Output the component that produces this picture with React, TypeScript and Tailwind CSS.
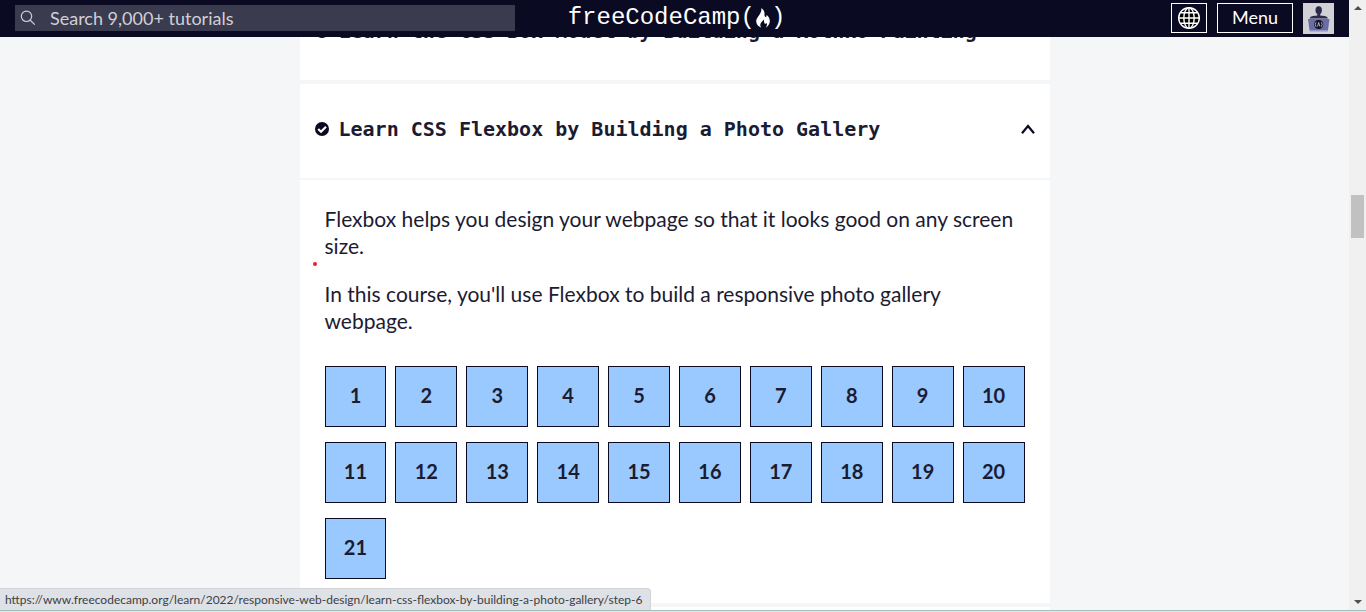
import React from "react";

const steps = Array.from({ length: 21 }, (_, i) => i + 1);
const courseUrl =
  "https://www.freecodecamp.org/learn/2022/responsive-web-design/learn-css-flexbox-by-building-a-photo-gallery";

function SearchIcon() {
  return (
    <svg viewBox="0 0 16 16" className="size-4" fill="none" stroke="#d0d0d5" strokeWidth="1.2" aria-hidden="true">
      <circle cx="6.5" cy="6.3" r="5.2" />
      <path d="M10.3 10.2 L14.8 14.6" />
    </svg>
  );
}

function GlobeIcon() {
  return (
    <svg viewBox="0 0 24 24" className="size-6" fill="#000" stroke="#fff" strokeWidth="1.4" aria-hidden="true">
      <circle cx="12" cy="12" r="10.3" />
      <ellipse cx="12" cy="12" rx="5.2" ry="10.3" />
      <path d="M12 1.7V22.3M1.7 12H22.3M3.4 6.8H20.6M3.4 17.2H20.6" />
    </svg>
  );
}

function Avatar() {
  return (
    <svg viewBox="0 0 31 31" className="size-[31px]" aria-hidden="true">
      <rect width="31" height="31" fill="#d0d0d5" />
      <ellipse cx="15.7" cy="7.2" rx="3.2" ry="4" fill="#2a2a4e" />
      <path d="M6.5 15.5Q7 13.2 10 13L14.3 12.6V10H17.2V12.6L21.5 13Q24.5 13.2 25 15.5Z" fill="#2a2a4e" />
      <path d="M5 16H26.5L25 27H6.5Z" fill="#6a6ca5" />
      <path d="M6.5 27.8H25" stroke="#8587c0" strokeWidth="1.2" />
      <circle cx="15.7" cy="21.5" r="4.6" fill="#12122a" />
      <path d="M13 19.3q-1.5 2.2 0 4.4M18.4 19.3q1.5 2.2 0 4.4M14.5 23.5l1.2-4 1.2 4" fill="none" stroke="#d0d0d5" strokeWidth=".8" />
    </svg>
  );
}

function Flame() {
  return (
    <svg viewBox="0 0 16 22" className="h-[22px] w-4" fill="#fff" aria-hidden="true">
      <path d="M6.3 1C9 2.8 9.7 5 9.5 7.5C9.4 9.2 10 10.3 11 9.9C11.8 9.5 11.7 8.5 11.3 7.8C13.8 9.5 15 12 14.8 14.5C14.7 17 13 19.5 10.8 20.8C12 19 12.3 17.5 11.6 16C11 17 10 17 9.5 16.2C8.8 15 9.3 13.6 8.3 12.5C8 14.3 5.6 15.3 5.3 17.5C5.2 18.8 5.6 19.9 6.3 20.8C3.3 19.5 1.2 17.3 1.2 14.3C1.2 9.8 7.2 7.5 6.3 1Z" />
    </svg>
  );
}

function CheckIcon() {
  return (
    <svg viewBox="0 0 14 14" className="size-[14px] shrink-0" aria-hidden="true">
      <circle cx="7" cy="7" r="7" fill="#0a0a23" />
      <path d="M3.2 7L6 9.7L11 4.7" fill="none" stroke="#fff" strokeWidth="2.2" />
    </svg>
  );
}

function BlockTitle({ title, children }: { title: string; children?: React.ReactNode }) {
  return (
    <h3>
      <button type="button" className="flex h-[94px] w-full items-center gap-[10px] bg-white px-[15px] pb-1 text-left">
        <CheckIcon />
        <span className="flex-1 font-['DejaVu_Sans_Mono',monospace] text-[20px] leading-6 font-bold whitespace-nowrap">
          {title}
        </span>
        {children}
      </button>
    </h3>
  );
}

export default function App() {
  return (
    <div className="flex h-screen flex-col overflow-hidden bg-[#f5f6f7] font-['Lato',sans-serif] text-[#1b1b32]">
      <div className="flex min-h-0 flex-1">
        <div className="flex min-w-0 flex-1 flex-col">
          <header className="z-10 grid h-[37px] shrink-0 grid-cols-[1fr_auto_1fr] items-center bg-[#0a0a23] px-[15px] pb-px text-white">
            <label className="flex h-[26px] w-full max-w-[500px] items-center gap-[14px] bg-[#3b3b4f] pl-[5px]">
              <SearchIcon />
              <input
                type="search"
                aria-label="Search"
                placeholder="Search 9,000+ tutorials"
                className="min-w-0 flex-1 bg-transparent text-[18px] leading-6 outline-none placeholder:text-[#d0d0d5]"
              />
            </label>
            <a
              href="https://www.freecodecamp.org/learn"
              className="flex items-center pb-px pl-1 font-['Liberation_Mono',monospace] text-[24px] leading-7"
            >
              freeCodeCamp(
              <Flame />
              <span>)</span>
            </a>
            <nav className="flex items-center justify-end gap-[10px]">
              <button type="button" aria-label="Change language" className="flex h-[30px] w-9 items-center justify-center border border-white">
                <GlobeIcon />
              </button>
              <button type="button" className="h-[30px] w-[76px] border border-white pb-[2px] text-[18px] leading-6">
                Menu
              </button>
              <a href="https://www.freecodecamp.org/settings" aria-label="Profile">
                <Avatar />
              </a>
            </nav>
          </header>

          <main className="flex min-h-0 flex-1 flex-col items-center overflow-hidden">
            <div className="-mt-[51px] flex w-full max-w-[750px] flex-col gap-1">
              <section className="bg-white">
                <BlockTitle title="Learn the CSS Box Model by Building a Rothko Painting" />
              </section>

              <section className="flex flex-col gap-[2px]">
                <BlockTitle title="Learn CSS Flexbox by Building a Photo Gallery">
                  <svg viewBox="0 0 14 10" className="h-[10px] w-[14px]" fill="none" stroke="#0a0a23" strokeWidth="2.2" aria-hidden="true">
                    <path d="M1 9.3L7 2L13 9.3" />
                  </svg>
                </BlockTitle>
                <div className="relative bg-white px-[25px] pt-[25px] pb-6">
                  <span className="absolute top-[82px] left-[13px] size-1 rounded-full bg-[#ed1c24]" />
                  <div className="flex flex-col gap-[21px] text-[21px] leading-[27px]">
                    <p>Flexbox helps you design your webpage so that it looks good on any screen size.</p>
                    <p>In this course, you'll use Flexbox to build a responsive photo gallery webpage.</p>
                  </div>
                  <ol className="mt-8 grid grid-cols-10 gap-x-[9px] gap-y-[15px]">
                    {steps.map((n) => (
                      <li key={n}>
                        <a
                          href={`${courseUrl}/step-${n}`}
                          className="flex h-[61px] items-center justify-center border border-[#0a0a23] bg-[#99c9ff] pb-[3px] text-[20px] leading-6 font-bold"
                        >
                          {n}
                        </a>
                      </li>
                    ))}
                  </ol>
                </div>
              </section>

              <section className="h-24 bg-white" />
            </div>
          </main>
        </div>

        <div className="flex w-[17px] shrink-0 flex-col items-center bg-[#f0f0f0] py-[6px]" aria-hidden="true">
          <svg viewBox="0 0 8 4" className="h-1 w-2" fill="#505050">
            <path d="M0 4L4 0L8 4Z" />
          </svg>
          <div className="mt-[185px] h-[43px] w-[13px] bg-[#c1c1c1]" />
          <svg viewBox="0 0 8 4" className="mt-auto h-1 w-2" fill="#505050">
            <path d="M0 0L4 4L8 0Z" />
          </svg>
        </div>
      </div>
      <div className="h-[2px] shrink-0 border-t border-[#9dc3bd] bg-[#d5ebe8]" />
      <div className="absolute bottom-[2px] left-0 z-20 rounded-tr border-t border-r border-[#d2d4d8] bg-[#dee1e6] pr-2 pl-[5px] text-[12px] leading-[21px] whitespace-nowrap text-[#3c4043]">
        {courseUrl}/step-6
      </div>
    </div>
  );
}
